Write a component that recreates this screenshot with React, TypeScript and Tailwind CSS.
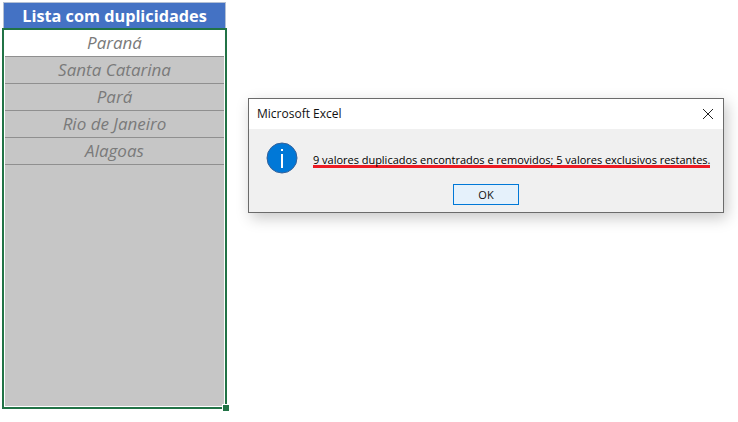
const cities = ["Paraná", "Santa Catarina", "Pará", "Rio de Janeiro", "Alagoas"]

function InfoIcon() {
  return (
    <svg width="32" height="32" viewBox="0 0 32 32" className="shrink-0">
      <circle cx="16" cy="16" r="15" fill="#0078d7" stroke="#34619a" strokeWidth="1" />
      <rect x="15" y="7" width="2" height="2" fill="#fff" />
      <rect x="15" y="12" width="2" height="14" fill="#fff" />
    </svg>
  )
}

function ListBox() {
  return (
    <div className="flex w-[225px] flex-col">
      <div className="mx-px h-[26px] border-x border-t border-[#b4c0d4] bg-[#4472c4] text-center text-[16.25px] leading-[26px] font-bold text-white">
        Lista com duplicidades
      </div>
      <div className="relative h-[381px] border-2 border-[#217346] bg-white px-px pb-px">
        <div className="h-full bg-[#c6c6c6]">
          {cities.map((city, i) => (
            <div
              key={city}
              className={`h-[27px] border-b border-[#8f8f8f] text-center text-[17px] leading-[26px] text-[#7a7a7a] italic ${i === 0 ? "bg-white" : ""}`}
            >
              {city}
            </div>
          ))}
        </div>
        <div className="absolute right-[-4px] bottom-[-4px] h-[7px] w-[7px] border-t border-l border-white bg-[#217346]" />
      </div>
    </div>
  )
}

function Dialog() {
  return (
    <div className="flex h-[115px] w-[476px] flex-col border border-[#6b6b6b] bg-[#f0f0f0] shadow-[3px_5px_14px_rgba(0,0,0,0.22)]">
      <div className="flex h-[30px] items-center justify-between bg-white pr-[9px] pl-2 text-[12px] text-[#111]">
        <span>Microsoft Excel</span>
        <svg width="12" height="12" viewBox="0 0 12 12" fill="none" stroke="#222" strokeWidth="1">
          <path d="M1 1l10 10M11 1L1 11" />
        </svg>
      </div>
      <div className="flex items-start gap-[15px] pt-[13px] pl-[17px]">
        <InfoIcon />
        <div className="mt-[8px] h-[18px] w-[397px] border-b-[3px] border-[#ed1c24] text-[11px] leading-[20px] tracking-[-0.02px] whitespace-nowrap text-black">
          9 valores duplicados encontrados e removidos; 5 valores exclusivos restantes.
        </div>
      </div>
      <div className="flex justify-center pt-[10px]">
        <button className="h-[21px] w-[66px] border border-[#0078d7] bg-[#e5f1fb] text-[11px] leading-[18px] text-[#111]">
          OK
        </button>
      </div>
    </div>
  )
}

export default function App() {
  return (
    <div className="flex h-[422px] w-[738px] items-start overflow-hidden bg-white pt-[2px] pl-[2px] font-['Open_Sans','Noto_Sans',sans-serif]">
      <ListBox />
      <div className="ml-[21px] pt-[96px]">
        <Dialog />
      </div>
    </div>
  )
}
